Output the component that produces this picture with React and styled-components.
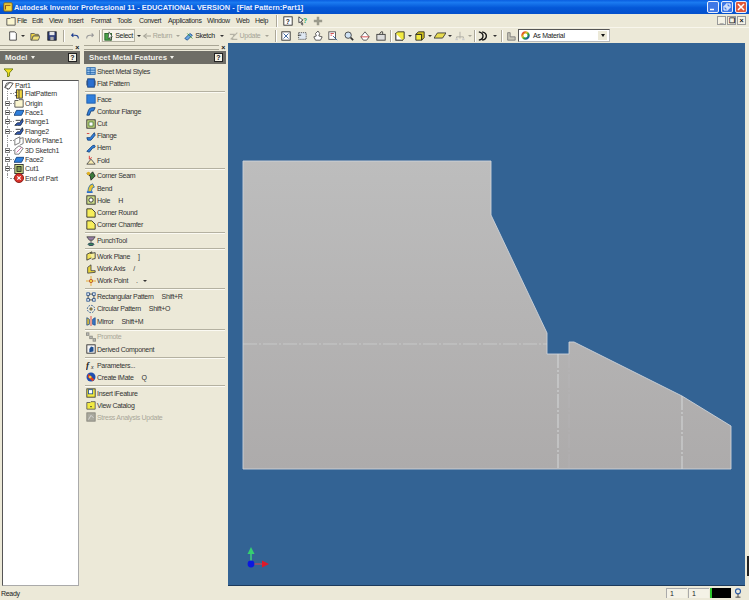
import React from 'react';
import styled, { createGlobalStyle } from 'styled-components';

const GlobalStyle = createGlobalStyle`
  html, body {
    margin: 0;
    padding: 0;
    width: 749px;
    height: 600px;
    overflow: hidden;
    background: #ece9d8;
    font-family: "Liberation Sans", Arial, sans-serif;
    font-size: 7px;
    letter-spacing: -0.3px;
    color: #222;
  }
  * { box-sizing: border-box; }
`;

const Window = styled.div`
  width: 749px;
  height: 600px;
  display: flex;
  flex-direction: column;
`;

const TitleBar = styled.div`
  height: 14px;
  display: flex;
  align-items: center;
  padding: 0 2px 0 3px;
  gap: 1px;
  background: linear-gradient(180deg, #0a5ee0 0%, #1a7af0 18%, #0458d8 55%, #0350cc 100%);
  color: #fff;
  font-size: 7.4px;
  font-weight: bold;
  letter-spacing: 0;
`;

const TitleText = styled.span`
  flex: 1;
  white-space: nowrap;
  color: #e8f0ff;
`;

const WinButton = styled.span`
  width: 12px;
  height: 12px;
  border: 1px solid #e8eefc;
  border-radius: 2px;
  margin-left: 1px;
  display: flex;
  align-items: center;
  justify-content: center;
  background: ${p => (p.$close ? '#e0583a' : '#3f78e6')};
`;

const MenuBar = styled.div`
  height: 14px;
  display: flex;
  align-items: center;
  padding: 0 3px 0 4px;
  background: #ece9d8;
  border-bottom: 1px solid #f8f6ec;
`;

const MenuItem = styled.span`
  width: ${p => p.$w}px;
  white-space: nowrap;
  color: #2a2a2a;
  letter-spacing: -0.35px;
`;

const Spacer = styled.div`
  flex: 1;
`;

const MdiButton = styled.span`
  width: 9px;
  height: 9px;
  margin-left: 1px;
  background: #f4f2e6;
  border: 1px solid #999;
  display: flex;
  align-items: center;
  justify-content: center;
  font-weight: bold;
  line-height: 1;
  color: #111;
`;

const ToolBar = styled.div`
  height: 15px;
  display: flex;
  align-items: center;
  padding-left: 7px;
  background: #ece9d8;
`;

const Slot = styled.span`
  width: ${p => p.$w}px;
  height: 13px;
  flex: none;
  display: flex;
  align-items: center;
  justify-content: center;
  gap: 1px;
  white-space: nowrap;
  color: ${p => (p.$off ? '#a5a396' : '#222')};
  background: ${p => (p.$on ? '#f6f4ea' : 'transparent')};
  box-shadow: ${p => (p.$on ? 'inset 0 0 0 1px #b5b2a2' : 'none')};
`;

const Caret = styled.span`
  width: ${p => p.$w || 9}px;
  flex: none;
  display: flex;
  justify-content: center;
  &::before {
    content: '';
    border-left: 2px solid transparent;
    border-right: 2px solid transparent;
    border-top: 2px solid ${p => (p.$off ? '#a5a396' : '#333')};
  }
`;

const VSep = styled.span`
  width: 1px;
  height: 12px;
  flex: none;
  margin: 0 ${p => p.$m || 3}px;
  background: #aca899;
  box-shadow: 1px 0 0 #fff;
`;

const Combo = styled.div`
  width: 92px;
  height: 13px;
  flex: none;
  display: flex;
  align-items: center;
  gap: 3px;
  padding: 0 2px 0 2px;
  background: #fff;
  border: 1px solid #555;
  border-right-color: #bbb;
  border-bottom-color: #bbb;
`;

const ComboArrow = styled.span`
  margin-left: auto;
  width: 9px;
  height: 9px;
  background: #ece9d8;
  display: flex;
  align-items: center;
  justify-content: center;
  &::before {
    content: '';
    border-left: 2.5px solid transparent;
    border-right: 2.5px solid transparent;
    border-top: 3px solid #111;
  }
`;

const Main = styled.div`
  flex: 1;
  min-height: 0;
  display: flex;
`;

const Dock = styled.div`
  width: ${p => p.$w}px;
  margin-left: ${p => p.$ml}px;
  flex: none;
  display: flex;
  flex-direction: column;
`;

const Grip = styled.div`
  height: 8px;
  display: flex;
  align-items: center;
  gap: 2px;
  padding-right: 1px;
  &::before {
    content: '';
    flex: 1;
    height: 3px;
    border-top: 1px solid #a9a695;
    border-bottom: 1px solid #a9a695;
  }
`;

const GripClose = styled.span`
  font-weight: bold;
  line-height: 1;
  color: #111;
`;

const PanelHead = styled.div`
  height: 13px;
  flex: none;
  display: flex;
  align-items: center;
  justify-content: space-between;
  padding: 0 3px 0 5px;
  background: #6e6d66;
  color: #f2f1ea;
  font-size: 7.8px;
  font-weight: bold;
  letter-spacing: 0;
`;

const HeadTitle = styled.span`
  display: flex;
  align-items: center;
  gap: 3px;
  &::after {
    content: '';
    border-left: 2.5px solid transparent;
    border-right: 2.5px solid transparent;
    border-top: 3px solid #f2f1ea;
  }
`;

const HeadHelp = styled.span`
  width: 9px;
  height: 9px;
  background: #f4f2e6;
  border: 1px solid #222;
  color: #111;
  font-weight: bold;
  font-size: 7px;
  line-height: 7px;
  text-align: center;
`;

const FilterRow = styled.div`
  height: 16px;
  flex: none;
  display: flex;
  align-items: center;
  padding-left: 4px;
`;

const Tree = styled.div`
  flex: 1;
  margin-left: 2px;
  margin-right: 1px;
  background: #fff;
  border: 1px solid #555;
  border-right-color: #aaa;
  border-bottom-color: #aaa;
`;

const TreeRow = styled.div`
  height: ${p => (p.$root ? 8 : 9.4)}px;
  display: flex;
  align-items: center;
  white-space: nowrap;
  color: #333;
  letter-spacing: -0.2px;
  padding-left: ${p => (p.$root ? 1 : 2)}px;
  position: relative;
  ${p => (p.$root ? '' : `
    &::before {
      content: '';
      position: absolute;
      left: 4px;
      top: 0;
      height: ${p.$last ? '50%' : '100%'};
      border-left: 1px dotted #999;
    }
  `)}
`;

const Expander = styled.span`
  width: 5px;
  height: 5px;
  flex: none;
  border: 1px solid #888;
  background: #fff;
  visibility: ${p => (p.$show ? 'visible' : 'hidden')};
  position: relative;
  z-index: 1;
  &::before {
    content: '';
    position: absolute;
    left: 0;
    top: 1px;
    width: 3px;
    height: 1px;
    background: #333;
  }
`;

const TreeLine = styled.span`
  width: 4px;
  flex: none;
  border-top: 1px dotted #999;
`;

const Features = styled.div`
  flex: 1;
  padding-top: 1px;
`;

const Row = styled.div`
  height: 12.2px;
  display: flex;
  align-items: center;
  padding-left: 2px;
  white-space: nowrap;
  color: ${p => (p.$off ? '#a9a799' : '#333')};
`;

const RowIcon = styled.span`
  width: 10px;
  height: 10px;
  flex: none;
  margin-right: 1px;
  display: flex;
`;

const Hotkey = styled.span`
  margin-left: 8px;
`;

const RowSep = styled.div`
  height: 3.7px;
  display: flex;
  align-items: center;
  padding: 0 1px;
  &::before {
    content: '';
    flex: 1;
    height: 1px;
    background: #b4b1a1;
    box-shadow: 0 1px 0 #fbfaf3;
  }
`;

const Viewport = styled.div`
  width: 517px;
  margin-left: 2px;
  flex: none;
  background: #336394;
  border-bottom: 1px solid #1c3a5c;
`;

const Canvas = styled.svg`
  display: block;
  width: 517px;
  height: 542px;
`;

const RightEdge = styled.div`
  flex: 1;
  display: flex;
  flex-direction: column;
  justify-content: flex-end;
  padding-bottom: 10px;
  align-items: flex-end;
  &::after {
    content: '';
    width: 2px;
    height: 20px;
    background: #222;
  }
`;

const StatusBar = styled.div`
  height: 14px;
  display: flex;
  align-items: center;
  padding: 0 5px 0 1px;
`;

const StatusCell = styled.span`
  width: 21px;
  height: 10px;
  margin-left: 1px;
  padding-left: 3px;
  line-height: 10px;
  background: #f4f2e6;
  border-left: 1px solid #aaa;
  border-top: 1px solid #aaa;
`;

const ColorCell = styled.span`
  width: 21px;
  height: 10px;
  margin-left: 1px;
  margin-right: 2px;
  background: #000;
  border-left: 2px solid #2bc62b;
`;

const S = ({ children, w = 10, h = 10, vb = '0 0 12 12' }) => (
  <svg width={w} height={h} viewBox={vb}>{children}</svg>
);

const boxIcon = (fill, stroke) => <S><rect x="1" y="1" width="10" height="10" fill={fill} stroke={stroke} /></S>;

const icons = {
  styles: <S><rect x="1" y="2" width="10" height="8" fill="#9cc6ec" stroke="#1d5fa8" /><path d="M1 5h10M1 8h10M5 2v8" stroke="#1d5fa8" /></S>,
  flat: <S><rect x="2" y="1" width="8" height="10" fill="#2a6fd0" stroke="#133c78" /><path d="M1 3v6M11 3v6" stroke="#133c78" /></S>,
  face: boxIcon('#2f7fdc', '#1a5aa8'),
  contour: <S><path d="M1 11 3 5q1-3 4-3h4L9 6H6l-2 5z" fill="#2f7fdc" stroke="#123f78" /></S>,
  cut: <S><rect x="1" y="1" width="10" height="10" fill="#cfe08a" stroke="#222" /><rect x="3.5" y="3.5" width="5" height="5" fill="#fff" stroke="#3a6a20" /></S>,
  flange: <S><path d="M1 8h4l5-6 1 3-5 6H2z" fill="#2f7fdc" stroke="#123f78" /><path d="M1 3h3" stroke="#c33" /></S>,
  hem: <S><path d="M1 10 8 3q3-1 3 1t-3 2l-4 5z" fill="#2f7fdc" stroke="#123f78" /></S>,
  fold: <S><path d="M1 11 6 5l5 6z" fill="#f5e9b0" stroke="#444" /><path d="M4 1v4l3-2" stroke="#d22" fill="none" /></S>,
  seam: <S><path d="M1 3l4 3 1 5 5-5-3-5-3 3z" fill="#3a7a3a" stroke="#222" /><circle cx="3" cy="3" r="2" fill="#e0b020" /></S>,
  bend: <S><path d="M2 11 3 6q1-4 5-5l2 4q-3 0-3 3l-1 3z" fill="#e8c430" stroke="#2a6fb0" /><path d="M1 11h7" stroke="#2a6fd0" strokeWidth="2" /></S>,
  hole: <S><rect x="1" y="1" width="10" height="10" fill="#cfe08a" stroke="#222" /><circle cx="6" cy="6" r="2.6" fill="#fff" stroke="#222" /></S>,
  corner: <S><path d="M1 1h6l4 4v6H1z" fill="#f7ee5a" stroke="#222" /></S>,
  punch: <S><path d="M1 1h10L8 5H4z" fill="#9a7fa8" stroke="#444" /><path d="M6 5v3" stroke="#444" /><ellipse cx="6" cy="10" rx="3.5" ry="1.5" fill="#3a8a5a" stroke="#235" /></S>,
  plane: <S><path d="M1 4l6-3v7l-6 3z" fill="#f2e25a" stroke="#333" /><path d="M5 3l6-1v7l-4 1" fill="#f7ee9a" stroke="#333" /></S>,
  axis: <S><path d="M2 11V4l4-3v7h5v2z" fill="#e8d43a" stroke="#444" /></S>,
  point: <S><path d="M6 0v12M0 6h12" stroke="#e4a020" /><circle cx="6" cy="6" r="2" fill="#f0d040" stroke="#b53" /></S>,
  rect: <S><g fill="#fff" stroke="#1f4f90"><rect x="1" y="1" width="3" height="3" /><rect x="8" y="1" width="3" height="3" /><rect x="1" y="8" width="3" height="3" /><rect x="8" y="8" width="3" height="3" /></g><path d="M4 2.5h4M4 9.5h4M2.5 4v4M9.5 4v4" stroke="#333" /></S>,
  circ: <S><circle cx="6" cy="6" r="4.4" fill="none" stroke="#1f4f90" strokeDasharray="2 1.4" /><circle cx="6" cy="6" r="1.4" fill="#e8c430" stroke="#444" /></S>,
  mirror: <S><path d="M1 2l3 2v6l-3 1z" fill="#e8c430" stroke="#1f4f90" /><path d="M11 2 8 4v6l3 1z" fill="#3a78c8" stroke="#1f4f90" /><path d="M6 0v12" stroke="#d33" /></S>,
  promote: <S><g fill="#bbb" stroke="#8a8a80"><rect x="0.5" y="1" width="3" height="3" /><rect x="4.5" y="5" width="3" height="3" /><rect x="8.5" y="8" width="3" height="3" /></g></S>,
  derived: <S><rect x="1" y="1" width="10" height="10" fill="#f4f4f4" stroke="#222" /><path d="M4 10V6l2-3 3 1v5z" fill="#1f4f90" /></S>,
  params: <S><text x="0" y="10" fontFamily="Liberation Serif, serif" fontStyle="italic" fontWeight="bold" fontSize="11" fill="#222">f</text><text x="6" y="11" fontFamily="Liberation Serif, serif" fontStyle="italic" fontSize="7" fill="#222">x</text></S>,
  imate: <S><circle cx="6" cy="6" r="5.4" fill="#1f4fb0" /><path d="M3 2l7 7-2 2-6-5z" fill="#e04020" /><circle cx="5" cy="6" r="1.6" fill="#f0d040" /></S>,
  ifeature: <S><rect x="1" y="1" width="10" height="10" fill="#f2ea40" stroke="#333" /><rect x="3" y="2" width="5" height="5" fill="#fff" stroke="#1f4f90" /></S>,
  catalog: <S><path d="M1 3h4l1-1h5v9H1z" fill="#f2ea40" stroke="#555" /><path d="M5 8h2" stroke="#222" /></S>,
  stress: <S><rect x="1" y="1" width="10" height="10" fill="#a9a89e" stroke="#85847a" /><path d="M3 9l3-5 3 3" stroke="#ddd" fill="none" /></S>,
  part: <S><path d="M1 9 7 3l4 1-5 7z" fill="#fff" stroke="#333" /><path d="M1 9l2-5 4-1" fill="none" stroke="#333" /></S>,
  flatTree: <S><rect x="3" y="1" width="7" height="10" fill="#f2d640" stroke="#333" /><path d="M1 4h3M1 8h3M6 1v10" stroke="#333" /></S>,
  folder: <S><path d="M1 3h4l1-1h5v9H1z" fill="#fbf6d0" stroke="#444" /></S>,
  sheet: <S><path d="M0 10 3 4h9L9 10z" fill="#2f7fdc" stroke="#123f78" /></S>,
  flangeTree: <S><path d="M1 10l3-3h3l3-5 1 3-3 5H4z" fill="#3a5fc0" stroke="#123" /><path d="M2 4h6" stroke="#222" /></S>,
  planeTree: <S><path d="M1 4l6-3v7l-6 3zM7 3l4-1v7l-4 2" fill="#fff" stroke="#666" /></S>,
  sketch: <S><path d="M1 11V5l5-4 5 3-5 7z" fill="#fff" stroke="#666" /><path d="M3 9l6-6" stroke="#c59" /></S>,
  cutTree: <S><rect x="1" y="0.5" width="10" height="11" fill="#cfe08a" stroke="#222" /><rect x="3.5" y="3" width="5" height="6" fill="#7d9a50" stroke="#222" /></S>,
  end: <S><circle cx="6" cy="6" r="5.5" fill="#d8322a" stroke="#7a1410" /><path d="M4 4l4 4M8 4l-4 4" stroke="#fff" strokeWidth="1.4" /></S>,
  doc: <S><path d="M2 1h6l2 2v8H2z" fill="#fff" stroke="#333" /></S>,
  open: <S><path d="M1 3h4l1 1h4v2H4l-2 5H1z" fill="#f2d640" stroke="#555" /><path d="M2 11l2-5h8l-2 5z" fill="#f2e27a" stroke="#555" /></S>,
  save: <S><rect x="1" y="1" width="10" height="10" fill="#31407c" stroke="#111" /><rect x="3" y="1" width="6" height="4" fill="#e8e8e8" /><rect x="4" y="7" width="4" height="4" fill="#aaa" /></S>,
  undo: <S><path d="M10 9q0-4-4-4H2m2-2L2 5l2 2" fill="none" stroke="#1f3f90" strokeWidth="1.3" /></S>,
  redo: <S><path d="M2 9q0-4 4-4h4M8 3l2 2-2 2" fill="none" stroke="#999" strokeWidth="1.3" /></S>,
  select: <S><rect x="1" y="3" width="8" height="8" fill="#4aa04a" stroke="#1f5f1f" /><path d="M6 1l4 6-2 0 1 3-1 1-1-3-2 1z" fill="#fff" stroke="#111" strokeWidth=".6" /></S>,
  back: <S><path d="M11 6H4m2-3L2 6l4 3" fill="none" stroke="#a5a396" strokeWidth="1.3" /></S>,
  sketchTool: <S><path d="M1 9l6-6 3 2-6 6z" fill="#6aa8e0" stroke="#1f4f90" /><path d="M4 3l6 6" stroke="#2a8a2a" /></S>,
  update: <S><path d="M2 10l8-8M1 4h5l-2 6h6" fill="none" stroke="#b5b3a6" strokeWidth="1.4" /></S>,
  zoomAll: <S><rect x="1" y="1" width="10" height="10" fill="#fff" stroke="#222" /><path d="M3 3l6 6M9 3l-6 6" stroke="#1f4f90" /></S>,
  zoomWin: <S><rect x="2" y="2" width="9" height="8" fill="#dfe8f2" stroke="#444" strokeDasharray="1.5 1" /><path d="M1 5h4" stroke="#222" /></S>,
  pan: <S><path d="M6 0l2 3-1 3 4 1-2 4H3L1 7l3-1-1-3z" fill="#fff" stroke="#444" /></S>,
  face2: <S><rect x="1" y="1" width="8" height="9" fill="#fff" stroke="#444" /><path d="M6 6l5 5" stroke="#1f4f90" /><path d="M3 3h4M3 5h2" stroke="#c33" /></S>,
  magnify: <S><circle cx="5" cy="5" r="3.8" fill="#cfe2f4" stroke="#333" /><path d="M8 8l3 3" stroke="#333" strokeWidth="2" /></S>,
  orbit: <S><path d="M6 1l5 6-3 4H4L1 7z" fill="#fff" stroke="#444" /><path d="M1 7h10" stroke="#c33" /></S>,
  camera: <S><rect x="1" y="4" width="10" height="7" fill="#ddd" stroke="#333" /><path d="M4 4l2-3h2v3" fill="none" stroke="#333" /></S>,
  cubeWire: <S><rect x="1" y="3" width="8" height="8" fill="#fff" stroke="#222" strokeWidth="1.2" /><path d="M1 3l2-2h8v8l-2 2" fill="#f2ea40" stroke="#222" /></S>,
  cubeShade: <S><path d="M1 4h7v7H1z" fill="#f2ea40" stroke="#222" /><path d="M1 4l3-3h7v7l-3 3V4z" fill="#d8c820" stroke="#222" /></S>,
  ground: <S w={12} h={7} vb="0 0 14 8"><path d="M0 7 4 1h10L10 7z" fill="#e8dc50" stroke="#333" /></S>,
  tree: <S><path d="M6 1v4M2 7h8M2 7v2M6 5v4M10 7v2" stroke="#aaa8a0" /><rect x="0.5" y="9" width="3" height="2" fill="#ccc" /><rect x="8.5" y="9" width="3" height="2" fill="#ccc" /></S>,
  shadow: <S><path d="M1 1q5 1 5 5t-5 5M5 1q5 1 5 5t-5 5" fill="none" stroke="#111" strokeWidth="1.6" /></S>,
  mat: <S><path d="M2 2h3v5h6v4H2z" fill="#c8c6b8" stroke="#777" /></S>,
  wheel: <svg width="9" height="9" viewBox="0 0 12 12"><circle cx="6" cy="6" r="4.2" fill="#fff" stroke="url(#wheelGrad)" strokeWidth="3" /><defs><linearGradient id="wheelGrad" x1="0" y1="0" x2="1" y2="1"><stop offset="0" stopColor="#e02020" /><stop offset=".35" stopColor="#e0c020" /><stop offset=".65" stopColor="#20a040" /><stop offset="1" stopColor="#2040d0" /></linearGradient></defs></svg>,
  help: <S><rect x="1" y="1" width="10" height="10" fill="#fff" stroke="#222" /><text x="3.4" y="9" fontFamily="Liberation Sans, sans-serif" fontSize="8" fontWeight="bold" fill="#222">?</text></S>,
  whatsThis: <S><path d="M1 1l5 4-2 1 2 4-1 1-2-4-2 1z" fill="#fff" stroke="#333" /><text x="6" y="8" fontFamily="Liberation Sans, sans-serif" fontSize="8" fontWeight="bold" fill="#2a6">?</text></S>,
  plus: <S><path d="M6 1v10M1 6h10" stroke="#9a9a8c" strokeWidth="3" /></S>,
  app: <S><rect x="1" y="1" width="10" height="10" rx="1" fill="#f2d640" stroke="#7a5a10" /><path d="M3 9V4h6" stroke="#7a3a10" fill="none" /></S>,
  status: <S><circle cx="6" cy="4" r="3" fill="none" stroke="#2f5fa8" strokeWidth="1.4" /><path d="M6 7v4M3 11h6" stroke="#333" /></S>,
};

const menus = [
  ['File', 15], ['Edit', 17], ['View', 19], ['Insert', 23], ['Format', 26], ['Tools', 22],
  ['Convert', 29], ['Applications', 39], ['Window', 29], ['Web', 19], ['Help', 18],
];

const treeItems = [
  { label: 'FlatPattern', icon: 'flatTree' },
  { label: 'Origin', icon: 'folder', plus: true },
  { label: 'Face1', icon: 'sheet', plus: true },
  { label: 'Flange1', icon: 'flangeTree', plus: true },
  { label: 'Flange2', icon: 'flangeTree', plus: true },
  { label: 'Work Plane1', icon: 'planeTree' },
  { label: '3D Sketch1', icon: 'sketch', plus: true },
  { label: 'Face2', icon: 'sheet', plus: true },
  { label: 'Cut1', icon: 'cutTree', plus: true },
  { label: 'End of Part', icon: 'end' },
];

const features = [
  { label: 'Sheet Metal Styles', icon: 'styles' },
  { label: 'Flat Pattern', icon: 'flat' },
  'sep',
  { label: 'Face', icon: 'face' },
  { label: 'Contour Flange', icon: 'contour' },
  { label: 'Cut', icon: 'cut' },
  { label: 'Flange', icon: 'flange' },
  { label: 'Hem', icon: 'hem' },
  { label: 'Fold', icon: 'fold' },
  'sep',
  { label: 'Corner Seam', icon: 'seam' },
  { label: 'Bend', icon: 'bend' },
  { label: 'Hole', icon: 'hole', key2: 'H' },
  { label: 'Corner Round', icon: 'corner' },
  { label: 'Corner Chamfer', icon: 'corner' },
  'sep',
  { label: 'PunchTool', icon: 'punch' },
  'sep',
  { label: 'Work Plane', icon: 'plane', key2: ']' },
  { label: 'Work Axis', icon: 'axis', key2: '/' },
  { label: 'Work Point', icon: 'point', key2: '.', more: true },
  'sep',
  { label: 'Rectangular Pattern', icon: 'rect', key2: 'Shift+R' },
  { label: 'Circular Pattern', icon: 'circ', key2: 'Shift+O' },
  { label: 'Mirror', icon: 'mirror', key2: 'Shift+M' },
  'sep',
  { label: 'Promote', icon: 'promote', off: true },
  { label: 'Derived Component', icon: 'derived' },
  'sep',
  { label: 'Parameters...', icon: 'params' },
  { label: 'Create iMate', icon: 'imate', key2: 'Q' },
  'sep',
  { label: 'Insert iFeature', icon: 'ifeature' },
  { label: 'View Catalog', icon: 'catalog' },
  { label: 'Stress Analysis Update', icon: 'stress', off: true },
];

const Tool = ({ name, w = 15 }) => <Slot $w={w}>{icons[name]}</Slot>;

const FlatPattern = () => (
  <Canvas viewBox="228 43 517 542">
    <defs>
      <linearGradient id="sheetFill" x1="0" y1="0" x2="0" y2="1">
        <stop offset="0" stopColor="#bdbdbd" />
        <stop offset="1" stopColor="#adabab" />
      </linearGradient>
    </defs>
    <path
      d="M243 161H491V215L547 333V354H569V342H574L682 396L731 426V469H243Z"
      fill="url(#sheetFill)"
      stroke="#cdd3d9"
      strokeWidth="0.9"
    />
    <g stroke="#d9dcde" strokeWidth="0.9" strokeDasharray="14 2 2 2" fill="none">
      <path d="M243 344H547" opacity=".6" />
      <path d="M558 354V469" />
      <path d="M682 396V469" />
      <path d="M569 354V469" opacity=".15" />
    </g>
    <path d="M251 564V553" stroke="#3fd07a" strokeWidth="1.5" />
    <path d="M251 547l-3.5 7h7z" fill="#35d070" />
    <path d="M251 564H263" stroke="#d84050" strokeWidth="1" />
    <path d="M269 564l-7-3.5v7z" fill="#e01828" />
    <circle cx="251" cy="564" r="3.4" fill="#0a18e0" />
  </Canvas>
);

export default function App() {
  return (
    <Window>
      <GlobalStyle />
      <TitleBar>
        {icons.app}
        <TitleText>Autodesk Inventor Professional 11 - EDUCATIONAL VERSION - [Flat Pattern:Part1]</TitleText>
        <WinButton>
          <svg width="8" height="8" viewBox="0 0 8 8"><path d="M1 6.5h4" stroke="#fff" strokeWidth="1.5" /></svg>
        </WinButton>
        <WinButton>
          <svg width="8" height="8" viewBox="0 0 8 8"><path d="M3 1h4v4H3zM1 3h4v4H1z" fill="none" stroke="#fff" /></svg>
        </WinButton>
        <WinButton $close>
          <svg width="8" height="8" viewBox="0 0 8 8"><path d="M1 1l6 6M7 1L1 7" stroke="#fff" strokeWidth="1.5" /></svg>
        </WinButton>
      </TitleBar>

      <MenuBar>
        <Slot $w={13}>{icons.folder}</Slot>
        {menus.map(([label, w]) => <MenuItem key={label} $w={w}>{label}</MenuItem>)}
        <VSep $m={3} />
        <Tool name="help" />
        <Tool name="whatsThis" />
        <Tool name="plus" />
        <Spacer />
        <MdiButton>_</MdiButton>
        <MdiButton>❐</MdiButton>
        <MdiButton>×</MdiButton>
      </MenuBar>

      <ToolBar>
        <Tool name="doc" w={12} />
        <Caret $w={8} />
        <Tool name="open" w={16} />
        <Tool name="save" w={17} />
        <VSep $m={3} />
        <Tool name="undo" w={15} />
        <Tool name="redo" w={15} />
        <VSep $m={2} />
        <Slot $w={33} $on>{icons.select}Select</Slot>
        <Caret $w={7} />
        <Slot $w={30} $off>{icons.back}Return</Slot>
        <Caret $w={12} $off />
        <Slot $w={31}>{icons.sketchTool}Sketch</Slot>
        <Caret $w={13} />
        <Slot $w={33} $off>{icons.update}Update</Slot>
        <Caret $w={12} $off />
        <VSep $m={2} />
        <Tool name="zoomAll" w={15} />
        <Tool name="zoomWin" w={17} />
        <Tool name="pan" w={15} />
        <Tool name="face2" w={16} />
        <Tool name="magnify" w={15} />
        <Tool name="orbit" w={17} />
        <Tool name="camera" w={15} />
        <VSep $m={2} />
        <Tool name="cubeWire" w={13} />
        <Caret $w={7} />
        <Tool name="cubeShade" w={13} />
        <Caret $w={7} />
        <Tool name="ground" w={13} />
        <Caret $w={7} />
        <Tool name="tree" w={13} />
        <Caret $w={7} $off />
        <VSep $m={1} />
        <Tool name="shadow" w={14} />
        <Caret $w={9} />
        <VSep $m={2} />
        <Tool name="mat" w={14} />
        <Combo>
          {icons.wheel}
          As Material
          <ComboArrow />
        </Combo>
      </ToolBar>

      <Main>
        <Dock $w={80} $ml={0}>
          <Grip><GripClose>×</GripClose></Grip>
          <PanelHead>
            <HeadTitle>Model</HeadTitle>
            <HeadHelp>?</HeadHelp>
          </PanelHead>
          <FilterRow>
            <svg width="9" height="9" viewBox="0 0 10 10"><path d="M0 1h10L6 5.5V9L4 10V5.5z" fill="#f2e020" stroke="#6a7a10" /></svg>
          </FilterRow>
          <Tree>
            <TreeRow $root>
              <RowIcon>{icons.part}</RowIcon>
              Part1
            </TreeRow>
            {treeItems.map((item, i) => (
              <TreeRow key={item.label} $last={i === treeItems.length - 1}>
                <Expander $show={item.plus} />
                <TreeLine />
                <RowIcon>{icons[item.icon]}</RowIcon>
                {item.label}
              </TreeRow>
            ))}
          </Tree>
        </Dock>

        <Dock $w={142} $ml={4}>
          <Grip><GripClose>×</GripClose></Grip>
          <PanelHead>
            <HeadTitle>Sheet Metal Features</HeadTitle>
            <HeadHelp>?</HeadHelp>
          </PanelHead>
          <Features>
            {features.map((item, i) => (item === 'sep' ? <RowSep key={i} /> : (
              <Row key={item.label} $off={item.off}>
                <RowIcon>{icons[item.icon]}</RowIcon>
                {item.label}
                {item.key2 && <Hotkey>{item.key2}</Hotkey>}
                {item.more && <Caret $w={14} />}
              </Row>
            )))}
          </Features>
        </Dock>

        <Viewport>
          <FlatPattern />
        </Viewport>
        <RightEdge />
      </Main>

      <StatusBar>
        Ready
        <Spacer />
        <StatusCell>1</StatusCell>
        <StatusCell>1</StatusCell>
        <ColorCell />
        <RowIcon>{icons.status}</RowIcon>
      </StatusBar>
    </Window>
  );
}
